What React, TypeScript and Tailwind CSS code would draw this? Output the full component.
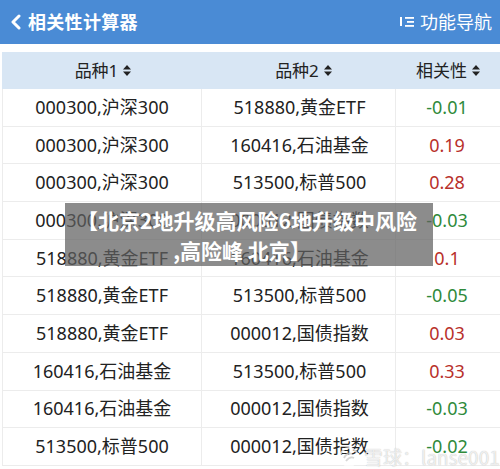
import React from "react";

const rows: [string, string, string][] = [
  ["000300,沪深300", "518880,黄金ETF", "-0.01"],
  ["000300,沪深300", "160416,石油基金", "0.19"],
  ["000300,沪深300", "513500,标普500", "0.28"],
  ["000300,沪深300", "000012,国债指数", "-0.03"],
  ["518880,黄金ETF", "160416,石油基金", "0.1"],
  ["518880,黄金ETF", "513500,标普500", "-0.05"],
  ["518880,黄金ETF", "000012,国债指数", "0.03"],
  ["160416,石油基金", "513500,标普500", "0.33"],
  ["160416,石油基金", "000012,国债指数", "-0.03"],
  ["513500,标普500", "000012,国债指数", "-0.02"],
];

const font = { fontFamily: '"Noto Sans", "Noto Sans CJK SC", sans-serif' };

function Sort() {
  return (
    <svg width="10" height="13" viewBox="0 0 10 13" className="ml-[4px]">
      <path d="M1 5.5 L5 1 L9 5.5 Z" fill="#222" />
      <path d="M1 7.5 L5 12 L9 7.5 Z" fill="#222" />
    </svg>
  );
}

export default function App() {
  return (
    <div className="relative w-[500px] h-[469px] overflow-hidden bg-white text-[#222]" style={font}>
      <div className="h-[44px] bg-[#4a8bd5] flex items-center justify-between text-white">
        <div className="flex items-center pl-[10px]">
          <svg width="12" height="16" viewBox="0 0 12 16">
            <path d="M9 2 L3 8 L9 14" stroke="white" strokeWidth="3" fill="none" strokeLinecap="round" strokeLinejoin="round" />
          </svg>
          <span className="ml-[6px] text-[18px] font-bold tracking-[0.3px]">相关性计算器</span>
        </div>
        <div className="flex items-center">
          <svg width="18" height="16" viewBox="0 0 18 16" className="mr-[4px]">
            <rect x="2" y="3" width="2" height="9" fill="white" />
            <rect x="7" y="3" width="9" height="1.8" fill="white" />
            <rect x="9" y="7" width="7" height="1.8" fill="white" />
            <rect x="7" y="11" width="9" height="1.8" fill="white" />
          </svg>
          <span className="text-[18px] pr-[8px]">功能导航</span>
        </div>
      </div>
      <div className="h-[8px]" />
      <div className="ml-[2px]">
        <div className="grid grid-cols-[199px_194px_1fr] h-[37px] bg-[#d8e6f4] text-[17px] items-center">
          <div className="flex items-center justify-center pl-[4px]">品种1<Sort /></div>
          <div className="flex items-center justify-center pl-[12px]">品种2<Sort /></div>
          <div className="flex items-center justify-center pl-[2px]">相关性<Sort /></div>
        </div>
        {rows.map((r, i) => {
          const neg = r[2].startsWith("-");
          return (
            <div
              key={i}
              className="grid grid-cols-[199px_194px_1fr] h-[37.7px] border-b border-[#ececec] border-l text-[18px] items-center"
            >
              <div className="h-full flex items-center justify-center border-r border-[#ececec]">{r[0]}</div>
              <div className="h-full flex items-center justify-center border-r border-[#ececec] pl-[2px]">{r[1]}</div>
              <div className={`h-full flex items-center justify-center pr-[2px] ${neg ? "text-[#2f8a3b]" : "text-[#b8302b]"}`}>{r[2]}</div>
            </div>
          );
        })}
      </div>

      <div className="absolute left-[65px] top-[203px] w-[368px] h-[63px] bg-[rgba(95,95,95,0.72)] flex flex-col items-center justify-center text-white font-bold text-[21px] leading-[30px]" style={{ fontFamily: '"Noto Sans CJK SC", sans-serif' }}>
        <div className="-ml-[4px] whitespace-nowrap">【北京2地升级高风险6地升级中风险</div>
        <div className="-ml-[14px] whitespace-nowrap">,高险峰 北京】</div>
      </div>

      <div className="absolute left-[338px] top-[443px] flex items-center text-[19px] text-white/75" style={{ fontFamily: '"Noto Sans CJK SC", sans-serif', textShadow: "0 0 1px rgba(0,0,0,0.3)" }}>
        <svg width="22" height="22" viewBox="0 0 22 22" className="mr-[4px] opacity-80">
          <circle cx="11" cy="11" r="9" stroke="rgba(255,255,255,0.9)" strokeWidth="2" fill="none" />
          <path d="M6 12 Q9 6 14 8 M8 15 Q12 10 16 12" stroke="rgba(200,200,200,0.9)" strokeWidth="1.8" fill="none" />
        </svg>
        <span>雪球：lanse001</span>
      </div>
    </div>
  );
}
